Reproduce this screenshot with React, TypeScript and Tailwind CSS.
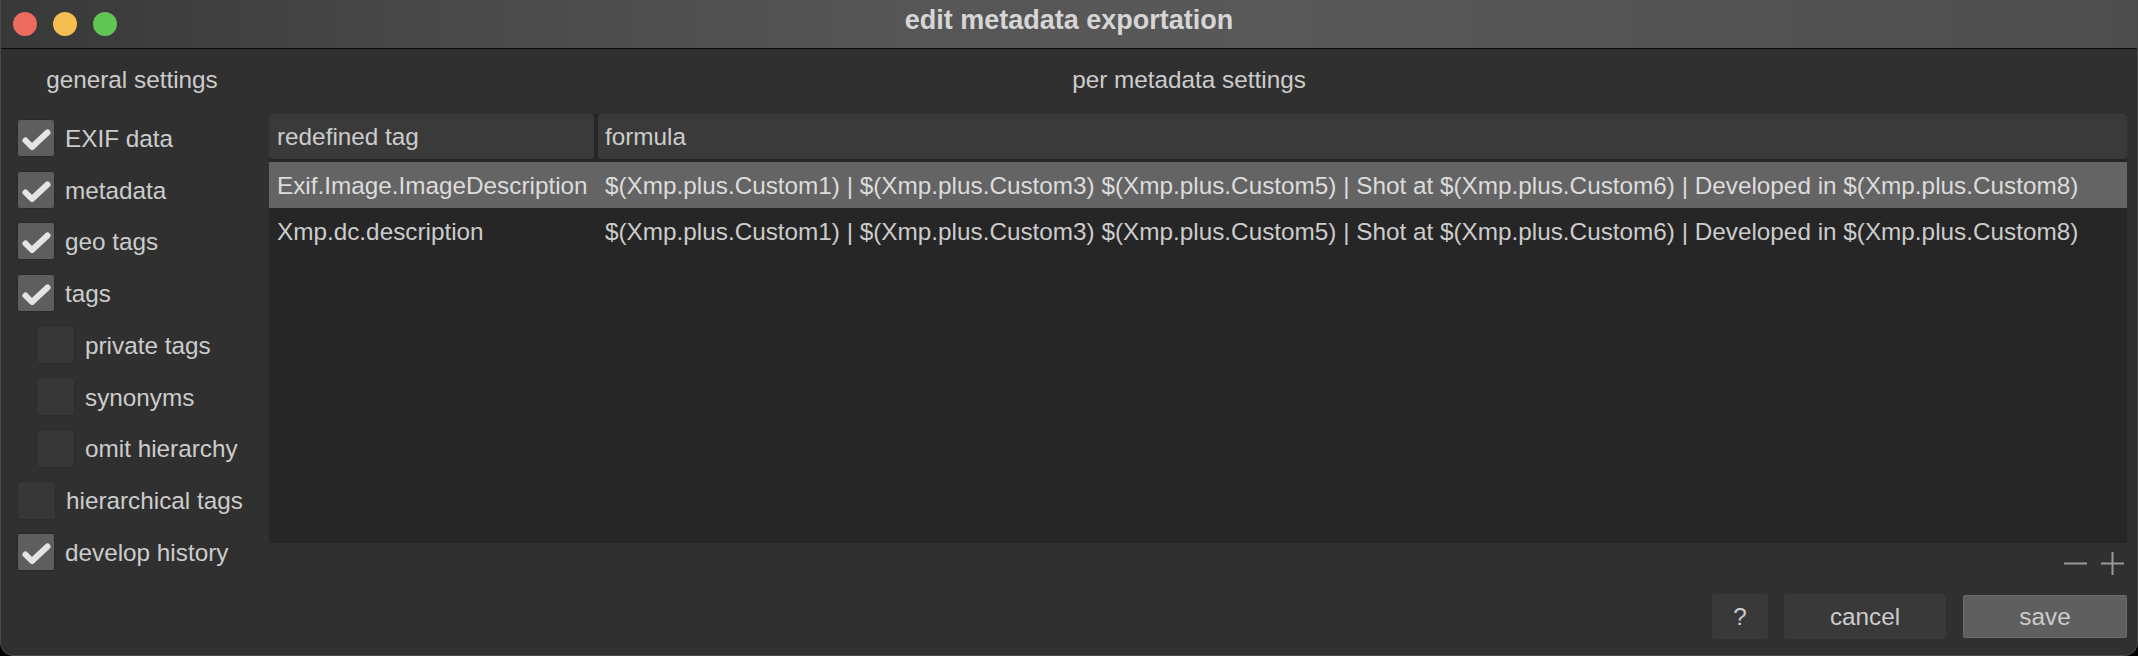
import React from "react";

const items = [
  { label: "EXIF data", checked: true, level: 0 },
  { label: "metadata", checked: true, level: 0 },
  { label: "geo tags", checked: true, level: 0 },
  { label: "tags", checked: true, level: 0 },
  { label: "private tags", checked: false, level: 1 },
  { label: "synonyms", checked: false, level: 1 },
  { label: "omit hierarchy", checked: false, level: 1 },
  { label: "hierarchical tags", checked: false, level: 0 },
  { label: "develop history", checked: true, level: 0 },
];

const formula =
  "$(Xmp.plus.Custom1) | $(Xmp.plus.Custom3) $(Xmp.plus.Custom5) | Shot at $(Xmp.plus.Custom6) | Developed in $(Xmp.plus.Custom8)";

const rows = [
  { tag: "Exif.Image.ImageDescription", formula, selected: true },
  { tag: "Xmp.dc.description", formula, selected: false },
];

function CheckBox({ checked }: { checked: boolean }) {
  if (checked) {
    return (
      <div className="w-[38px] h-[38px] shrink-0 rounded-[3px] bg-[#5e5e5e] border border-[#2a2a2a] flex items-center justify-center">
        <svg width="36" height="36" viewBox="0 0 36 36">
          <polyline
            points="7.5,20.5 14,27 29.5,12.5"
            fill="none"
            stroke="#e4e4e4"
            strokeWidth="6"
            strokeLinecap="round"
            strokeLinejoin="round"
          />
        </svg>
      </div>
    );
  }
  return <div className="w-[39px] h-[39px] shrink-0 rounded-[4px] bg-[#373737] border border-[#2c2c2c]" />;
}

export default function App() {
  return (
    <div className="w-[2138px] h-[656px] bg-black font-['Liberation_Sans',Arial,sans-serif] text-[#cccccc] text-[24.3px]">
      <div className="w-full h-full flex flex-col bg-[#303030] rounded-b-[14px] border-b border-x border-[#4a4a4a] overflow-hidden">
        {/* title bar */}
        <div className="h-[49px] shrink-0 grid grid-cols-[1fr_auto_1fr] items-center border-b border-[#0c0c0c] bg-[linear-gradient(to_right,#383838_0%,#474747_18%,#565656_42%,#585858_60%,#4e4e4e_100%)]">
          <div className="flex items-center gap-[16px] pl-[12px]">
            <div className="w-[24px] h-[24px] rounded-full bg-[#ec6a5e]" />
            <div className="w-[24px] h-[24px] rounded-full bg-[#f4bf4f]" />
            <div className="w-[24px] h-[24px] rounded-full bg-[#61c554]" />
          </div>
          <div className="font-bold text-[27px] text-[#d6d6d6] leading-[32px] pb-[8px]">edit metadata exportation</div>
          <div />
        </div>

        {/* body */}
        <div className="flex flex-1 min-h-0">
          {/* left */}
          <div className="w-[262px] shrink-0 flex flex-col pt-[17px]">
            <div className="text-center leading-[28px]">general settings</div>
            <div className="mt-[18px] flex flex-col">
              {items.map((it) => (
                <div
                  key={it.label}
                  className={
                    "h-[51.75px] flex items-center gap-[10px] " + (it.level === 1 ? "pl-[35px]" : "pl-[16px]")
                  }
                >
                  <CheckBox checked={it.checked} />
                  <span className="leading-[28px] whitespace-nowrap pt-[2px]">{it.label}</span>
                </div>
              ))}
            </div>
          </div>

          {/* right */}
          <div className="flex-1 flex flex-col pt-[17px] pl-[6px] pr-[10px]">
            <div className="text-center leading-[28px] pr-[18px]">per metadata settings</div>
            <div className="mt-[20px] h-[429px] bg-[#262626] flex flex-col">
              <div className="h-[45px] flex gap-[4px]">
                <div className="w-[325px] shrink-0 bg-[#3a3a3a] rounded-[4px] flex items-center pl-[8px] pt-[2px]">redefined tag</div>
                <div className="flex-1 bg-[#3a3a3a] rounded-[4px] flex items-center pl-[7px] pt-[2px]">formula</div>
              </div>
              <div className="h-[3px]" />
              {rows.map((r) => (
                <div
                  key={r.tag}
                  className={"h-[46px] flex items-center whitespace-nowrap pt-[2px] " + (r.selected ? "bg-[#646464] text-[#dcdcdc]" : "")}
                >
                  <div className="w-[329px] shrink-0 pl-[8px]">{r.tag}</div>
                  <div className="flex-1 pl-[7px]">{r.formula}</div>
                </div>
              ))}
            </div>

            <div className="mt-[9px] h-[23px] flex justify-end items-center gap-[14px] pr-[3px]">
              <svg width="23" height="23" viewBox="0 0 23 23">
                <line x1="0" y1="11.5" x2="23" y2="11.5" stroke="#9a9a9a" strokeWidth="2" />
              </svg>
              <svg width="23" height="23" viewBox="0 0 23 23">
                <line x1="0" y1="11.5" x2="23" y2="11.5" stroke="#9a9a9a" strokeWidth="2" />
                <line x1="11.5" y1="0" x2="11.5" y2="23" stroke="#9a9a9a" strokeWidth="2" />
              </svg>
            </div>

            <div className="mt-[19px] flex justify-end items-center gap-[16px]">
              <div className="w-[56px] h-[45px] rounded-[4px] bg-[#393939] flex items-center justify-center pt-[2px]">?</div>
              <div className="w-[162px] h-[45px] rounded-[4px] bg-[#393939] flex items-center justify-center pt-[2px]">cancel</div>
              <div className="w-[164px] h-[43px] ml-[1px] rounded-[2px] bg-[#5f5f5f] border border-[#6b6b6b] flex items-center justify-center pt-[2px]">save</div>
            </div>
          </div>
        </div>
      </div>
    </div>
  );
}
